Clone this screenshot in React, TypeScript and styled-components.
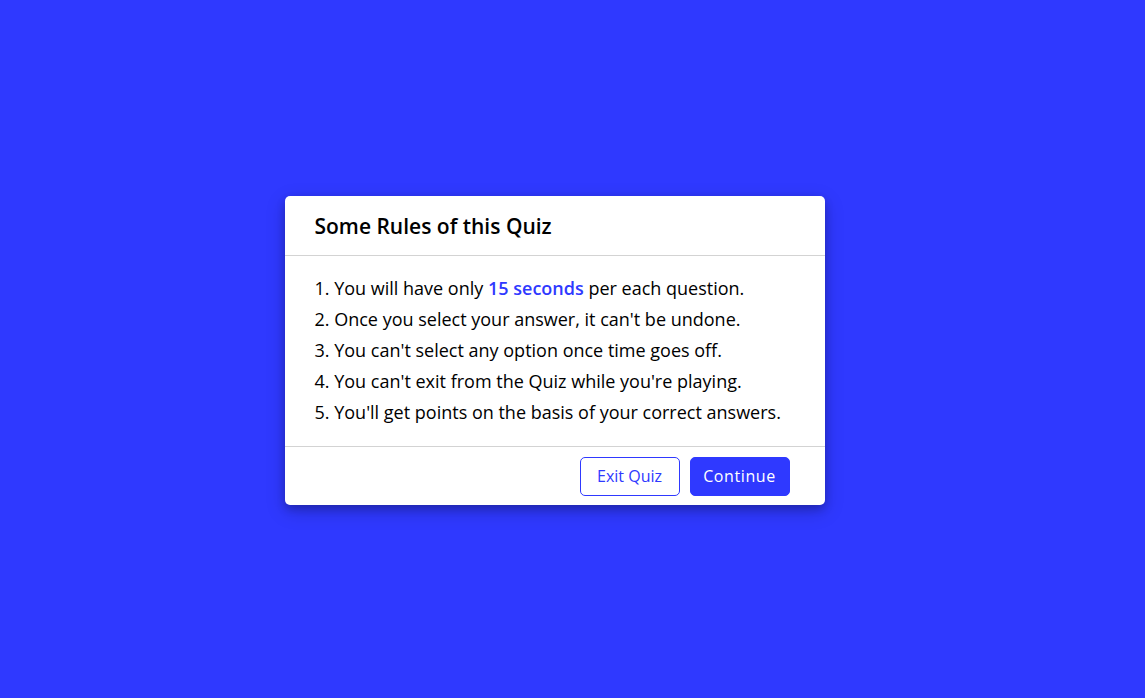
import React from 'react';
import styled, { createGlobalStyle } from 'styled-components';

const GlobalStyle = createGlobalStyle`
    * {
        margin: 0;
        padding: 0;
        box-sizing: border-box;
    }
    body {
        background: #2f39ff;
        font-family: 'Open Sans', 'Liberation Sans', sans-serif;
    }
`;

const Page = styled.div`
    width: 1145px;
    height: 698px;
    display: flex;
    align-items: center;
    justify-content: center;
    padding: 3px 36px 0 0;
`;

const InfoBox = styled.div`
    width: 540px;
    background: #fff;
    border-radius: 5px;
    box-shadow: 0 4px 8px 0 rgba(0, 0, 0, 0.2), 0 6px 20px 0 rgba(0, 0, 0, 0.19);
`;

const InfoTitle = styled.div`
    height: 60px;
    display: flex;
    align-items: center;
    padding: 0 30px;
    border-bottom: 1px solid lightgrey;
    span {
        font-size: 21px;
        font-weight: 600;
        color: #000;
    }
`;

const InfoList = styled.div`
    padding: 17px 30px 18px;
`;

const Rule = styled.div`
    font-size: 18px;
    line-height: 31px;
    color: #000;
    span {
        font-weight: 600;
        color: #2f39ff;
    }
`;

const Buttons = styled.div`
    height: 59px;
    display: flex;
    align-items: center;
    justify-content: flex-end;
    gap: 10px;
    padding: 0 35px;
    border-top: 1px solid lightgrey;
`;

const Button = styled.button<{ $primary?: boolean }>`
    height: 39px;
    width: 100px;
    font-family: inherit;
    font-size: 16px;
    font-weight: 500;
    letter-spacing: ${(props) => (props.$primary ? '0.6px' : '0')};
    border-radius: 5px;
    cursor: pointer;
    border: 1px solid #2f39ff;
    background: ${(props) => (props.$primary ? '#2f39ff' : '#fff')};
    color: ${(props) => (props.$primary ? '#fff' : '#2f39ff')};
`;

export default function App() {
    return (
        <>
            <GlobalStyle />
            <Page>
                <InfoBox>
                    <InfoTitle>
                        <span>Some Rules of this Quiz</span>
                    </InfoTitle>
                    <InfoList>
                        <Rule>
                            1. You will have only <span>15 seconds</span> per each question.
                        </Rule>
                        <Rule>2. Once you select your answer, it can't be undone.</Rule>
                        <Rule>3. You can't select any option once time goes off.</Rule>
                        <Rule>4. You can't exit from the Quiz while you're playing.</Rule>
                        <Rule>5. You'll get points on the basis of your correct answers.</Rule>
                    </InfoList>
                    <Buttons>
                        <Button>Exit Quiz</Button>
                        <Button $primary>Continue</Button>
                    </Buttons>
                </InfoBox>
            </Page>
        </>
    );
}
